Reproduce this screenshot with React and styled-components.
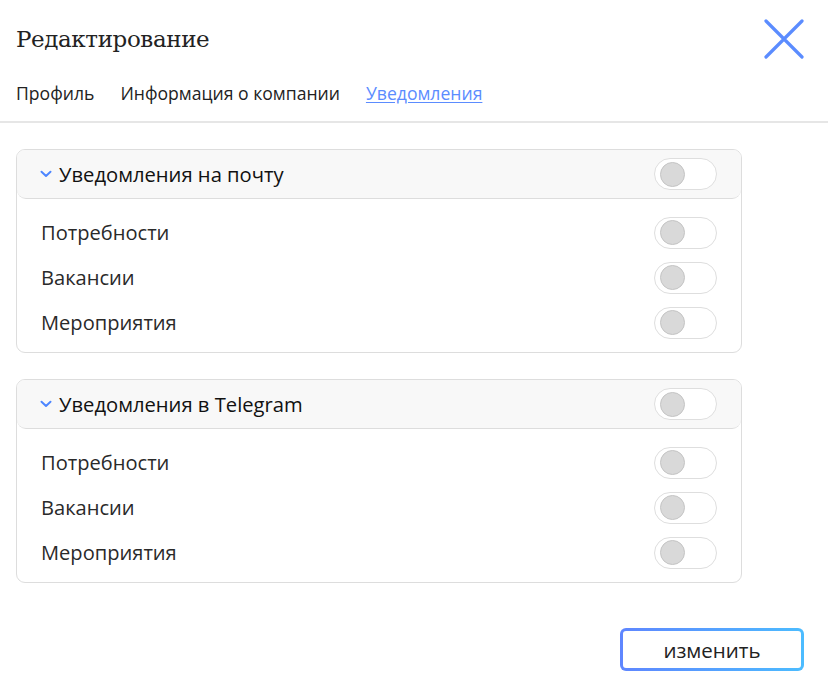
import React, { useState } from 'react';
import styled, { createGlobalStyle } from 'styled-components';

const GlobalStyle = createGlobalStyle`
  body {
    margin: 0;
    background: #fff;
    font-family: "Open Sans", "Noto Sans", sans-serif;
    color: #222;
  }
`;

const Page = styled.div`
  width: 828px;
  height: 689px;
  display: flex;
  flex-direction: column;
  box-sizing: border-box;
`;

const Header = styled.header`
  padding: 0 16px;
  border-bottom: 2px solid #e6e6e6;
`;

const TitleRow = styled.div`
  display: flex;
  align-items: center;
  justify-content: space-between;
  height: 78px;
`;

const Title = styled.h1`
  margin: 0;
  font-family: "DejaVu Serif", "Liberation Serif", serif;
  font-weight: normal;
  font-size: 23px;
  color: #222;
  letter-spacing: -0.4px;
`;

const CloseButton = styled.button`
  border: none;
  background: none;
  padding: 0;
  margin-right: 8px;
  width: 40px;
  height: 40px;
  display: flex;
  align-items: center;
  justify-content: center;
  cursor: pointer;
`;

const Tabs = styled.nav`
  display: flex;
  gap: 26px;
  height: 40px;
  align-items: flex-start;
  padding-top: 3px;
`;

const Tab = styled.a`
  font-size: 17.6px;
  color: ${p => (p.$active ? '#5b8cff' : '#222')};
  text-decoration: ${p => (p.$active ? 'underline' : 'none')};
  text-underline-offset: 2px;
  cursor: pointer;
`;

const Content = styled.main`
  padding: 26px 86px 0 16px;
  display: flex;
  flex-direction: column;
  gap: 26px;
`;

const Card = styled.section`
  border: 1px solid #dddddd;
  border-radius: 9px;
  overflow: hidden;
`;

const CardHead = styled.div`
  display: flex;
  align-items: center;
  height: 48px;
  padding: 0 24px 0 23px;
  background: #f8f8f8;
  border-bottom: 1px solid #dddddd;
  border-radius: 0 0 9px 9px;
`;

const HeadTitle = styled.span`
  flex: 1;
  font-size: 20.2px;
  color: #111;
  margin-left: 7px;
`;

const Rows = styled.div`
  padding: 11px 24px 7px 24px;
  display: flex;
  flex-direction: column;
`;

const Row = styled.div`
  display: flex;
  align-items: center;
  justify-content: space-between;
  height: 45px;
`;

const RowLabel = styled.span`
  font-size: 20.1px;
  color: #2a2a2a;
`;

const Track = styled.button`
  width: 63px;
  height: 32px;
  border-radius: 16px;
  border: 1px solid #dedede;
  background: #fff;
  padding: 0 0 0 5px;
  display: flex;
  align-items: center;
  justify-content: ${p => (p.$on ? 'flex-end' : 'flex-start')};
  box-sizing: border-box;
  cursor: pointer;
`;

const Knob = styled.span`
  width: 25px;
  height: 25px;
  border-radius: 50%;
  background: #d9d9d9;
  border: 1px solid #c4c4c4;
  box-sizing: border-box;
`;

const Footer = styled.footer`
  margin-top: auto;
  display: flex;
  justify-content: flex-end;
  padding: 0 24px 18px 0;
`;

const SubmitButton = styled.button`
  width: 184px;
  height: 43px;
  border-radius: 6px;
  border: 3px solid transparent;
  background:
    linear-gradient(#fff, #fff) padding-box,
    linear-gradient(90deg, #5f86ff, #4cbcff) border-box;
  font-family: "Open Sans", sans-serif;
  font-size: 20.5px;
  color: #222;
  cursor: pointer;
`;

const Toggle = () => {
  const [on, setOn] = useState(false);
  return (
    <Track $on={on} onClick={() => setOn(!on)}>
      <Knob />
    </Track>
  );
};

const Chevron = () => (
  <svg width="12" height="8" viewBox="0 0 12 8">
    <path d="M1.5 1.8 L6 6 L10.5 1.8" fill="none" stroke="#4d86ff" strokeWidth="2" strokeLinecap="round" strokeLinejoin="round" />
  </svg>
);

const groups = [
  { title: 'Уведомления на почту', items: ['Потребности', 'Вакансии', 'Мероприятия'] },
  { title: 'Уведомления в Telegram', items: ['Потребности', 'Вакансии', 'Мероприятия'] },
];

export default function App() {
  return (
    <Page>
      <GlobalStyle />
      <Header>
        <TitleRow>
          <Title>Редактирование</Title>
          <CloseButton aria-label="Закрыть">
            <svg width="40" height="40" viewBox="0 0 40 40">
              <path d="M2 2 L38 38 M38 2 L2 38" stroke="#5b8cff" strokeWidth="3.2" strokeLinecap="round" />
            </svg>
          </CloseButton>
        </TitleRow>
        <Tabs>
          <Tab>Профиль</Tab>
          <Tab>Информация о компании</Tab>
          <Tab $active>Уведомления</Tab>
        </Tabs>
      </Header>

      <Content>
        {groups.map(g => (
          <Card key={g.title}>
            <CardHead>
              <Chevron />
              <HeadTitle>{g.title}</HeadTitle>
              <Toggle />
            </CardHead>
            <Rows>
              {g.items.map(item => (
                <Row key={item}>
                  <RowLabel>{item}</RowLabel>
                  <Toggle />
                </Row>
              ))}
            </Rows>
          </Card>
        ))}
      </Content>

      <Footer>
        <SubmitButton>изменить</SubmitButton>
      </Footer>
    </Page>
  );
}
